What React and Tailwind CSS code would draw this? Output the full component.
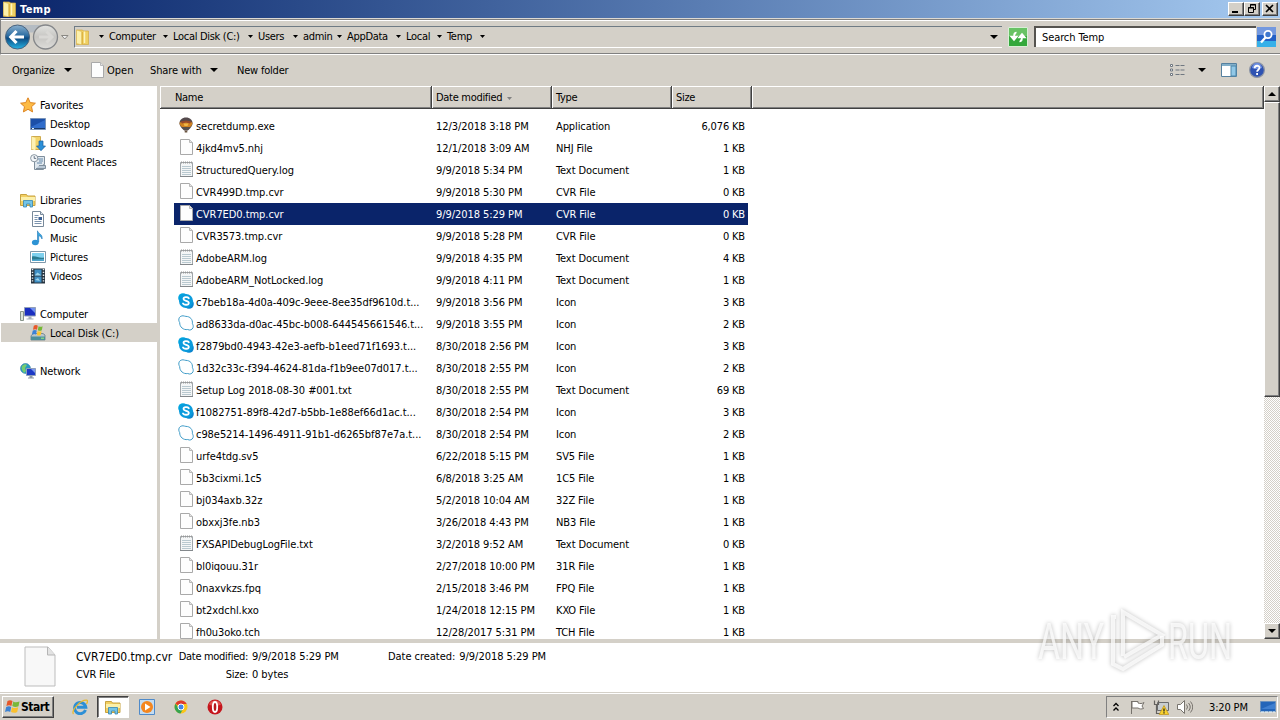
const files = [
    ["balloon", "secretdump.exe", "12/3/2018 3:18 PM", "Application", "6,076 KB"],
    ["file", "4jkd4mv5.nhj", "12/1/2018 3:09 AM", "NHJ File", "1 KB"],
    ["text", "StructuredQuery.log", "9/9/2018 5:34 PM", "Text Document", "1 KB"],
    ["file", "CVR499D.tmp.cvr", "9/9/2018 5:30 PM", "CVR File", "0 KB"],
    ["file", "CVR7ED0.tmp.cvr", "9/9/2018 5:29 PM", "CVR File", "0 KB"],
    ["file", "CVR3573.tmp.cvr", "9/9/2018 5:28 PM", "CVR File", "0 KB"],
    ["text", "AdobeARM.log", "9/9/2018 4:35 PM", "Text Document", "4 KB"],
    ["text", "AdobeARM_NotLocked.log", "9/9/2018 4:11 PM", "Text Document", "1 KB"],
    ["skype", "c7beb18a-4d0a-409c-9eee-8ee35df9610d.t...", "9/9/2018 3:56 PM", "Icon", "3 KB"],
    ["cloud", "ad8633da-d0ac-45bc-b008-644545661546.t...", "9/9/2018 3:55 PM", "Icon", "2 KB"],
    ["skype", "f2879bd0-4943-42e3-aefb-b1eed71f1693.t...", "8/30/2018 2:56 PM", "Icon", "3 KB"],
    ["cloud", "1d32c33c-f394-4624-81da-f1b9ee07d017.t...", "8/30/2018 2:55 PM", "Icon", "2 KB"],
    ["text", "Setup Log 2018-08-30 #001.txt", "8/30/2018 2:55 PM", "Text Document", "69 KB"],
    ["skype", "f1082751-89f8-42d7-b5bb-1e88ef66d1ac.t...", "8/30/2018 2:54 PM", "Icon", "3 KB"],
    ["cloud", "c98e5214-1496-4911-91b1-d6265bf87e7a.t...", "8/30/2018 2:54 PM", "Icon", "2 KB"],
    ["file", "urfe4tdg.sv5", "6/22/2018 5:15 PM", "SV5 File", "1 KB"],
    ["file", "5b3cixmi.1c5", "6/8/2018 3:25 AM", "1C5 File", "1 KB"],
    ["file", "bj034axb.32z", "5/2/2018 10:04 AM", "32Z File", "1 KB"],
    ["file", "obxxj3fe.nb3", "3/26/2018 4:43 PM", "NB3 File", "1 KB"],
    ["text", "FXSAPIDebugLogFile.txt", "3/2/2018 9:52 AM", "Text Document", "0 KB"],
    ["file", "bl0iqouu.31r", "2/27/2018 10:00 PM", "31R File", "1 KB"],
    ["file", "0naxvkzs.fpq", "2/15/2018 3:46 PM", "FPQ File", "1 KB"],
    ["file", "bt2xdchl.kxo", "1/24/2018 12:15 PM", "KXO File", "1 KB"],
    ["file", "fh0u3oko.tch", "12/28/2017 5:31 PM", "TCH File", "1 KB"],
];

const icons = {
    balloon: (
        <>
            <path d="M8 .5c4 0 6.500 2.500 6.500 5.700 0 3.300-3 5.800-4.800 7.300H6.300C4.500 12 1.500 9.500 1.500 6.200 1.500 3 4 .5 8 .5z" fill="#544a4c" />
            <path d="M1.600 5.500 8 4l6.400 1.500c.2 2-1 3.500-2.400 4.500H4C2.600 9 1.400 7.500 1.600 5.500z" fill="#d0821f" />
            <path d="M2.500 4.500 8 3.500l5.500 1L12 6.500 8 5.500 4 6.500z" fill="#96492b" />
            <path d="M5.500 6.500h5L9.500 9h-3z" fill="#eeb648" />
            <path d="M4 10h8l-2.200 3H6.200z" fill="#57504c" />
            <path d="M6.700 13.500h2.600v2H6.700z" fill="#6a5540" />
        </>
    ),
    file: (
        <>
            <path d="M2.500.5h9l3 3v12h-12z" fill="#fdfdfd" stroke="#a9a9a9" />
            <path d="M11.500.5v3h3" fill="#e4e4e4" stroke="#b9b9b9" />
        </>
    ),
    text: (
        <>
            <path d="M2.500 1.500h12v14h-12z" fill="#f4f6f7" stroke="#a0a6aa" />
            <path d="M4 5.500h9M4 7.500h9M4 9.500h9M4 11.500h9M4 13.500h9" stroke="#b9c9d0" />
            <path d="M3 1.500h11" stroke="#999" strokeWidth="2" strokeDasharray="1 1" />
            <path d="M2 15.500h13" stroke="#83888c" />
        </>
    ),
    skype: (
        <>
            <circle cx="5" cy="5" r="4.800" fill="#00a5e0" />
            <circle cx="11" cy="11" r="4.800" fill="#0b86cf" />
            <circle cx="8" cy="8" r="7" fill="#0a9bdc" />
            <path d="M10.800 5.300C9.700 3.700 5.500 3.800 5.500 6c0 2.300 5.300 1.300 5.300 3.900 0 2.300-4.600 2.400-5.800.6" fill="none" stroke="#fff" strokeWidth="1.800" strokeLinecap="round" />
        </>
    ),
    cloud: (
        <path d="M5 .8c1.200 0 1.900.6 2.900.6 4.200 0 7 3 6.500 7.300.8 1.400 1.100 2.600.6 4-.7 2-3.200 3-5.300 1.800C5.500 15.300 1.500 12 1.700 7.600.7 6 .5 4.300 1.300 2.700 2 1.500 3.400.8 5 .8z" fill="#fff" stroke="#3f9cc8" />
    ),
    folder: (
        <>
            <path d="M1.500 1h6l1 1h5v13.500h-12z" fill="#efd062" stroke="#d3a944" strokeWidth=".7" />
            <path d="M1.500 1 6.500 2.500v13.300L1.500 14.500z" fill="#fcf0ac" stroke="#dcb958" strokeWidth=".6" />
            <path d="M9.500 2.500V14" stroke="#fdf3bc" strokeWidth="1.500" />
            <path d="M7.500 3v12" stroke="#dfb540" />
        </>
    ),
    star: <path d="m8 .8 2.200 4.800 5.200.6-3.900 3.500 1.100 5.200L8 12.300l-4.600 2.600 1.100-5.200L.6 6.200l5.200-.6z" fill="#fdbb45" stroke="#dd8421" />,
    desktop: (
        <>
            <path d="M.5 2.500h15v11H.5z" fill="#1b4fa8" stroke="#7893b9" />
            <path d="M1 11 15 4v8H1z" fill="#2f6ccb" />
            <path d="M1 12.500h14" stroke="#193968" />
            <path d="M2 12.500h2" stroke="#e4f3ff" />
        </>
    ),
    downloads: (
        <>
            <path d="M1.500 1.500h9v13h-9z" fill="#f3d469" stroke="#ceaa4e" />
            <path d="m1.500 1.500 4 1.500v12.500l-4-1.500z" fill="#fdf2b4" />
            <path d="M9 6h4v5h2.500L11 15.700 6.500 11H9z" fill="#2b8fd8" stroke="#1a5e9e" strokeWidth=".7" />
        </>
    ),
    recent: (
        <>
            <path d="M4.500 2.500h10v8h-1v5h-9z" fill="#dfe7ee" stroke="#7f8f9d" />
            <path d="M6 14.500h9.500v-3H9" fill="#b9c8d6" stroke="#7f8f9d" />
            <path d="M8 5h5M9 7h4M7 9h5" stroke="#6589aa" />
            <circle cx="4.200" cy="4.200" r="3.600" fill="#f3f6f9" stroke="#8996a1" />
            <path d="M4.200 2v2.400h2" fill="none" stroke="#45576a" strokeWidth=".8" />
        </>
    ),
    libraries: (
        <>
            <path d="M.5 2.500h6l1 1.500h7.500v9.500H.5z" fill="#f2cf62" stroke="#c8a340" />
            <path d="M1 5h14v4H1z" fill="#fcf0a9" />
            <path d="M3.500 8.500h9v6.500H10v-3H6.500v3h-3z" fill="#74c4e6" stroke="#3586b4" strokeWidth=".8" />
        </>
    ),
    documents: (
        <>
            <path d="M2.500.5h8l3 3v12h-11z" fill="#fff" stroke="#78899a" />
            <path d="M4.500 4.500h4M4.500 6.500h3M4.500 8.500h3M4.500 10.500h7M4.500 12.500h7" stroke="#7b93ae" />
            <path d="M8.500 6h3.500v3H8.500z" fill="#3a5f93" />
            <path d="M10.500.5v3h3" fill="#dde5ec" stroke="#78899a" />
        </>
    ),
    music: (
        <>
            <path d="M7.500 12V.8c.8 3 5.500 3.500 4.500 8.200-.6-2-2-3-3.300-3.200V12z" fill="#3ba7de" stroke="#1d76b8" strokeWidth=".6" />
            <ellipse cx="5.300" cy="12.500" rx="3.400" ry="2.700" fill="#2d93d4" />
        </>
    ),
    pictures: (
        <>
            <path d="M.5 2.500h15v11H.5z" fill="#fff" stroke="#7f98aa" />
            <path d="M2 4h12v8H2z" fill="#7ed0ee" />
            <path d="M2 7.500c4-1 7 2 12 1V12H2z" fill="#2a7c91" />
            <path d="M2 10.500 14 10v2H2z" fill="#4ea5cc" />
        </>
    ),
    videos: (
        <>
            <path d="M1 .5h14v15H1z" fill="#25333f" />
            <path d="M2.500 1v14M13.500 1v14" stroke="#e4ebef" strokeWidth="1.500" strokeDasharray="1.300 1.500" />
            <path d="M4.500 1.500h7v6h-7zM4.500 8.500h7v6h-7z" fill="#3f8fc4" />
            <path d="m4.500 7.500 3-3 4 3zM5 12l3-2 2 3z" fill="#9bd4ec" />
        </>
    ),
    computer: (
        <>
            <path d="M.5 5.500h3v9h-3z" fill="#dbe3d9" stroke="#88958b" />
            <path d="M4.500 1.500h11v8.500h-11z" fill="#1a2fc0" stroke="#93a0b8" />
            <path d="m10 2 5 0v5z" fill="#6f8ff0" />
            <path d="M8.500 10.500h3v2h2v1h-7v-1h2z" fill="#a5afb9" />
        </>
    ),
    disk: (
        <>
            <path d="m2 9.500 2-1h9l2 1.500v5H1v-4z" fill="#b9c5cd" stroke="#677d88" strokeWidth=".8" />
            <path d="M1 11.500h14V15H1z" fill="#4c8f9a" />
            <path d="M11 13.200h3" stroke="#9df27c" />
            <path d="M3.800.8c1.500-1 3-1 4 0L7 4.800c-1.200-.8-2.500-.8-4 0z" fill="#e8592a" />
            <path d="M8.600 1.200c1.500.9 2.700.8 4 0L11.800 5.200c-1.400.8-2.500.7-4 0z" fill="#74b833" />
            <path d="M2.800 5.600c1.500-.8 2.800-.8 4 0L5.900 9.600c-1.200-.8-2.500-.8-4 0z" fill="#3b82d6" />
            <path d="M7.600 6c1.500.8 2.700.8 4 0l-.8 4c-1.400.8-2.600.7-4 0z" fill="#fcc52c" />
        </>
    ),
    network: (
        <>
            <circle cx="5.500" cy="5.500" r="5" fill="#2799c4" stroke="#337da5" strokeWidth=".6" />
            <path d="M2 3c2-2 4-2 5-1L5 5l1 3-2 2C2 8 1 5 2 3z" fill="#75cc70" />
            <path d="M6.500 5.500h9v7h-9z" fill="#1c39c6" stroke="#8f9fba" />
            <path d="m11 6 4 0v4z" fill="#7b99f0" />
            <path d="M9.500 13h3v1.500h1.500v1H8v-1h1.500z" fill="#8e99a6" />
        </>
    ),
};

const Icon = ({ name, className = "size-4" }) => (
    <svg viewBox="0 0 16 16" className={`shrink-0 ${className}`}>{icons[name]}</svg>
);

const Arrow = ({ className = "w-[5px] h-[3px]" }) => (
    <svg viewBox="0 0 6 3" preserveAspectRatio="none" className={`shrink-0 ${className}`}>
        <path d="M0 0h6L3 3z" fill="currentColor" />
    </svg>
);

const places = [
    ["star", "Favorites", 0], ["desktop", "Desktop", 1], ["downloads", "Downloads", 1], ["recent", "Recent Places", 1], null,
    ["libraries", "Libraries", 0], ["documents", "Documents", 1], ["music", "Music", 1], ["pictures", "Pictures", 1], ["videos", "Videos", 1], null,
    ["computer", "Computer", 0], ["disk", "Local Disk (C:)", 1], null,
    ["network", "Network", 0],
];

const crumbs = [
    ["Computer", "w-[64px]"], ["Local Disk (C:)", "w-[85px]"], ["Users", "w-[45px]"],
    ["admin", "w-[44px]"], ["AppData", "w-[59px]"], ["Local", "w-[41px]"], ["Temp", "w-[43px]"],
];

const raised = "bg-[#d4d0c8] border border-t-white border-l-white border-r-[#404040] border-b-[#404040] shadow-[inset_-1px_-1px_0_#808080]";

const TitleBar = () => (
    <div className="h-[18px] shrink-0 flex items-center bg-linear-to-r from-[#0a246a] to-[#a6caf0] pl-[2px] pr-[2px]">
        <Icon name="folder" />
        <span className="ml-[2px] pt-[2px] text-white font-bold tracking-[0.4px]">Temp</span>
        <div className="ml-auto flex">
            <div className={`w-[16px] h-[14px] ${raised}`}>
                <svg viewBox="0 0 14 12" className="w-[14px] h-[12px]"><path d="M3 8h6v2H3z" /></svg>
            </div>
            <div className={`w-[16px] h-[14px] ${raised}`}>
                <svg viewBox="0 0 14 12" className="w-[14px] h-[12px]" fill="none" stroke="#000">
                    <path d="M5.500 4V1.500h5v5H9M5 2h6M3.500 4.500h5v5h-5zM3 5h6" />
                </svg>
            </div>
            <div className={`ml-[2px] w-[16px] h-[14px] ${raised}`}>
                <svg viewBox="0 0 14 12" className="w-[14px] h-[12px]" stroke="#000" strokeWidth="1.600">
                    <path d="m3 2 7 7M10 2 3 9" />
                </svg>
            </div>
        </div>
    </div>
);

const NavButtons = () => (
    <svg viewBox="0 0 70 30" className="-ml-px w-[70px] h-[30px] shrink-0">
        <defs>
            <linearGradient id="back" x1="0" y1="0" x2="0" y2="1">
                <stop offset="0" stopColor="#8bb0ce" />
                <stop offset=".45" stopColor="#2a6ca2" />
                <stop offset=".55" stopColor="#0c4a82" />
                <stop offset="1" stopColor="#27b4e4" />
            </linearGradient>
            <linearGradient id="fwd" x1="0" y1="0" x2="0" y2="1">
                <stop offset="0" stopColor="#e3e3e1" />
                <stop offset=".5" stopColor="#c6c5c2" />
                <stop offset="1" stopColor="#deddda" />
            </linearGradient>
        </defs>
        <path d="M16 3h30v5q-14 5-30 0z" fill="#b5bcc3" />
        <circle cx="17.500" cy="15" r="12" fill="url(#back)" stroke="#49637e" />
        <path d="M11 15h13M16.500 9 10.800 15l5.700 6" fill="none" stroke="#fff" strokeWidth="3.200" />
        <circle cx="45.500" cy="15" r="12" fill="url(#fwd)" stroke="#85878a" strokeWidth="1.300" />
        <path d="M39 15h12M46.500 9.500 52 15l-5.500 5.500" fill="none" stroke="#d9d8d5" strokeWidth="3" />
        <path d="M61.500 13.500h6.500l-3.200 3.500z" fill="#eee" stroke="#8a8883" />
    </svg>
);

const AddressBar = () => (
    <div className="h-[37px] shrink-0 flex items-center border-t border-b border-l border-t-[#dcd9d3] border-l-[#808080] border-b-white shadow-[inset_0_1px_0_#808080,inset_0_2px_0_#fff,inset_0_-1px_0_#808080] [&_span]:pt-[1px]">
        <NavButtons />
        <div className="ml-[4px] w-[928px] h-[22px] flex items-center border-t border-l border-b border-t-[#6f7b84] border-l-[#6f7b84] border-b-white">
            <Icon name="folder" />
            <Arrow className="w-[5px] h-[3px] ml-[8px] mr-[5px]" />
            {crumbs.map(([label, width]) => (
                <div key={label} className={`flex items-center justify-between pr-[5px] shrink-0 ${width}`}>
                    <span className="whitespace-nowrap">{label}</span>
                    <Arrow className="w-[5px] h-[3px]" />
                </div>
            ))}
            <Arrow className="ml-auto mr-[4px] w-[8px] h-[4px]" />
        </div>
        <svg viewBox="0 0 20 20" className="ml-[6px] size-[20px] shrink-0">
            <path d="M.5.500h19v19H.5z" fill="#35a83c" stroke="#d9efd6" />
            <path d="M1 1h18v8H1z" fill="#69c265" />
            <path d="M8.500 5.500c-2 0-2.500 1-2.500 3v2M3 9.500 6 13l3-3.500zM11.500 14.500c2 0 2.500-1 2.500-3v-2M11 10.500 14 7l3 3.500z" fill="#fff" stroke="#fff" strokeWidth="1.500" />
        </svg>
        <div className="ml-[6px] w-[222px] h-[21px] flex items-center bg-white border-l-2 border-t-2 border-[#55534f] pl-[6px]">
            <span className="tracking-[-0.1px]">Search Temp</span>
        </div>
        <svg viewBox="0 0 19 20" className="ml-px w-[19px] h-[20px] shrink-0">
            <path d="M0 0h19v20H0z" fill="#2360c6" />
            <path d="M0 0h19v8H0z" fill="#7499df" />
            <path d="M0 14h19v6H0z" fill="#36b0e8" />
            <circle cx="11" cy="7.500" r="3.600" fill="#3f78cf" stroke="#fff" strokeWidth="1.800" />
            <path d="m8.500 10.500-4.500 5" stroke="#fff" strokeWidth="2.400" />
        </svg>
    </div>
);

const Toolbar = () => (
    <div className="h-[31px] shrink-0 flex items-center pb-px pl-[12px] pr-[15px] [&_span]:pt-[1px]">
        <span className="w-[52px] tracking-[-0.2px]">Organize</span>
        <Arrow className="w-[8px] h-[4px]" />
        <Icon name="file" className="ml-[17px] size-[16px]" />
        <span className="ml-[2px] w-[43px] tracking-[0px]">Open</span>
        <span className="w-[60px] tracking-[-0.1px]">Share with</span>
        <Arrow className="w-[8px] h-[4px]" />
        <span className="ml-[19px] tracking-[-0.2px]">New folder</span>
        <svg viewBox="0 0 16 14" className="ml-auto w-[16px] h-[14px]" fill="none" stroke="#6f7780">
            <path d="M1.500 1.500h2v2h-2zM1.500 6h2v2h-2zM1.500 10.500h2v2h-2z" fill="#fff" />
            <path d="M6.500 2.500h9M6.500 7h9M6.500 11.500h9" strokeDasharray="4 1" />
        </svg>
        <Arrow className="ml-[13px] w-[8px] h-[4px]" />
        <svg viewBox="0 0 16 14" className="ml-[15px] w-[16px] h-[14px]">
            <path d="M.5.500h15v13H.5z" fill="#fff" stroke="#55809f" />
            <path d="M1 1h14v2H1z" fill="#82afc9" />
            <path d="M10 3h5v10h-5z" fill="#91c8e7" stroke="#4d86aa" />
        </svg>
        <svg viewBox="0 0 16 16" className="ml-[12px] size-[16px]">
            <circle cx="8" cy="8" r="7.400" fill="#2e52b2" stroke="#8d95a5" strokeWidth="1.200" />
            <path d="M3 6a5 5 0 0 1 10 0q-5 2-10 0z" fill="#6c8de0" />
            <path d="M5.600 6.200C5.600 3 10.500 3 10.500 5.800c0 2-2.400 1.800-2.400 4M8.100 11v2" fill="none" stroke="#fff" strokeWidth="1.800" />
        </svg>
    </div>
);

const Sidebar = () => (
    <div className="w-[160px] shrink-0 border-r-3 border-[#d4d0c8] pt-[9px]">
        {places.map((p, i) =>
            p ? (
                <div key={i} className={`h-[19px] flex items-center gap-[4px] ml-px ${p[2] ? "pl-[29px]" : "pl-[19px]"} ${p[0] === "disk" ? "bg-[#d4d0c8]" : ""}`}>
                    <Icon name={p[0]} />
                    <span className="whitespace-nowrap pt-[2px] tracking-[-0.15px]">{p[1]}</span>
                </div>
            ) : (
                <div key={i} className="h-[19px]" />
            )
        )}
    </div>
);

const headCell = "h-full flex items-center pt-[2px] border-r border-b border-[#404040] shadow-[inset_1px_1px_0_#fff,inset_-1px_-1px_0_#808080]";

const FileList = () => (
    <div className="flex-1 min-w-0 flex flex-col overflow-hidden">
        <div className="h-[23px] shrink-0 flex bg-[#d4d0c8]">
            <div className={`w-[272px] pl-[15px] ${headCell}`}>Name</div>
            <div className={`w-[120px] pl-[4px] ${headCell}`}>
                Date modified
                <Arrow className="ml-[5px] w-[5px] h-[3px] text-[#808080]" />
            </div>
            <div className={`w-[120px] pl-[4px] ${headCell}`}>Type</div>
            <div className={`w-[80px] pl-[4px] ${headCell}`}>Size</div>
            <div className={`flex-1 ${headCell}`} />
        </div>
        <div className="pt-[6px] pl-[14px] tracking-[-0.06px] [&_span]:pt-[2px]">
            {files.map(([icon, name, date, type, size]) => (
                <div key={name} className={`w-[574px] h-[22px] flex items-center whitespace-nowrap ${name === "CVR7ED0.tmp.cvr" ? "bg-[#0a246a] text-white" : ""}`}>
                    <Icon name={icon} className="size-[16px] ml-[4px] mr-[2px] -mt-[2px]" />
                    <span className="w-[240px]">{name}</span>
                    <span className="w-[120px]">{date}</span>
                    <span className="w-[120px] tracking-[-0.1px]">{type}</span>
                    <span className="w-[69px] text-right tracking-[-0.15px]">{size}</span>
                </div>
            ))}
        </div>
    </div>
);

const ScrollBar = () => (
    <div className="w-[16px] shrink-0 flex flex-col bg-[conic-gradient(#fff_25%,#d4d0c8_0_50%,#fff_0_75%,#d4d0c8_0)] bg-size-[2px_2px]">
        <div className={`h-[16px] shrink-0 flex items-center justify-center ${raised}`}>
            <Arrow className="w-[8px] h-[4px] rotate-180" />
        </div>
        <div className={`h-[295px] shrink-0 ${raised}`} />
        <div className={`mt-auto h-[16px] shrink-0 flex items-center justify-center ${raised}`}>
            <Arrow className="w-[8px] h-[4px]" />
        </div>
    </div>
);

const Details = () => (
    <div className="h-[50px] shrink-0 flex bg-white border-b border-[#d4d0c8] leading-[18px] whitespace-nowrap">
        <svg viewBox="0 0 32 40" className="ml-[24px] mt-[3px] w-[32px] h-[41px]">
            <path d="M1 .5h23l7 8v31H1z" fill="#f8f8f8" stroke="#bdbdbd" />
            <path d="M23.500.5v8H31" fill="#e3e3e3" stroke="#b5b5b5" />
        </svg>
        <div className="ml-[20px] w-[102px] pt-[5px]">
            <p className="text-[12px] tracking-[-0.02px]">CVR7ED0.tmp.cvr</p>
            <p className="tracking-[-0.15px]">CVR File</p>
        </div>
        <div className="w-[70px] pt-[5px] flex flex-col items-end">
            <p>Date modified:</p>
            <p>Size:</p>
        </div>
        <div className="ml-[4px] w-[136px] pt-[5px] tracking-[-0.04px]">
            <p>9/9/2018 5:29 PM</p>
            <p>0 bytes</p>
        </div>
        <div className="pt-[5px] flex gap-[4px]">
            <p className="tracking-[-0.04px]">Date created:</p>
            <p className="tracking-[-0.04px]">9/9/2018 5:29 PM</p>
        </div>
    </div>
);

const Taskbar = () => (
    <div className="h-[27px] shrink-0 flex items-center border-t border-white bg-[#d4d0c8] pl-[2px] pr-[2px]">
        <div className={`w-[52px] h-[22px] flex items-center pl-px ${raised}`}>
            <svg viewBox="0 0 16 16" className="size-[16px] shrink-0">
                <path d="M3.500 2c2-1.300 3.500-1 5 0L7.400 7c-1.700-1.200-3.200-1-5 0z" fill="#e5572a" />
                <path d="M9.300 2.500c2 1.200 3.500 1 6.200 0L14.500 7.300c-2.500 1-4.200.8-6.200-.2z" fill="#79b83a" />
                <path d="M2.200 8c1.800-1 3.400-1.200 5 0L6.200 13c-1.500-1.200-3.200-1-5.200 0z" fill="#3c82d3" />
                <path d="M8 8.200c1.900 1.100 3.500 1.200 6.200.1l-1 4.700c-2.500 1.200-4.200 1-6.200 0z" fill="#fbc02d" />
            </svg>
            <span className="ml-px font-bold text-[12px] tracking-[-0.5px]">Start</span>
        </div>
        <svg viewBox="0 0 16 16" className="ml-[18px] size-[16px]" fill="none">
            <path d="M13.500 11A5.600 5.600 0 1 1 13.800 8.300H5" stroke="#2c8fd6" strokeWidth="3" />
            <path d="M1.500 15C-1 12 8 1 14.500 1.200c1.500.2 1 2.300 0 3.800" stroke="#e8b92e" strokeWidth="1.300" />
        </svg>
        <div className="ml-[9px] w-[32px] h-[22px] flex items-center justify-center bg-white border border-t-[#404040] border-l-[#404040] border-r-white border-b-white shadow-[inset_1px_1px_0_#808080]">
            <Icon name="libraries" />
        </div>
        <svg viewBox="0 0 16 16" className="ml-[10px] size-[16px]">
            <path d="M.5.500h15v15H.5z" fill="#c4dcf1" stroke="#4f8ac9" />
            <circle cx="8" cy="8" r="6" fill="#f4861f" />
            <path d="m6 4.500 5.500 3.500L6 11.500z" fill="#fff" />
        </svg>
        <svg viewBox="0 0 16 16" className="ml-[18px] size-[16px]">
            <circle cx="8" cy="8" r="6.500" fill="#fbc518" />
            <path d="M8 8 2.400 4.800A6.500 6.500 0 0 1 13.700 5H8z" fill="#df3a2c" />
            <path d="M8 8H5L2.400 4.800A6.500 6.500 0 0 0 7.500 14.500L10 10z" fill="#36a350" />
            <circle cx="8" cy="8" r="3" fill="#4285e8" stroke="#fff" />
        </svg>
        <svg viewBox="0 0 16 16" className="ml-[18px] size-[16px]">
            <circle cx="8" cy="8" r="7.500" fill="#c5161d" />
            <path d="M2 5.500a6.500 6.500 0 0 1 12 0q-6 3-12 0z" fill="#e25350" />
            <ellipse cx="8" cy="8" rx="2.200" ry="5" fill="#b71a1e" stroke="#fff" strokeWidth="1.800" />
        </svg>
        <div className="ml-auto w-[172px] h-[22px] flex items-center border border-t-[#808080] border-l-[#808080] border-r-white border-b-white">
            <svg viewBox="0 0 8 10" className="ml-[5px] w-[8px] h-[10px]" fill="none" stroke="#000" strokeWidth="1.300">
                <path d="m1.500 4 2.500-2.500L6.500 4M1.500 8.500 4 6l2.500 2.500" />
            </svg>
            <svg viewBox="0 0 16 16" className="ml-[9px] size-[16px]" fill="#fff" stroke="#77736d">
                <path d="M2.500 2v13M3 2.500h6v1.500c2 .8 4 .8 6-.5l-2 3.500 1.500 2.500c-2 .8-4 .5-5.500-.5H3z" />
            </svg>
            <svg viewBox="0 0 16 16" className="ml-[8px] size-[16px]">
                <path d="M4.500 3.500h11v8h-11z" fill="#c8cdd0" stroke="#696b6d" />
                <path d="M1.500 1.500v4h4v-4M3.500 5.500v9h4" fill="none" stroke="#64625f" strokeWidth="1.200" />
                <path d="m11 6.500 4.800 9H6.200z" fill="#f8d12d" stroke="#bb8f14" strokeWidth=".7" />
                <path d="M11 9.500v3M11 13.300v1.200" stroke="#222" strokeWidth="1.300" />
            </svg>
            <svg viewBox="0 0 17 16" className="ml-[7px] w-[17px] h-[16px]" fill="none" stroke="#77736d">
                <path d="M1.500 5.500h3l4-4v13l-4-4h-3z" fill="#fff" />
                <path d="M10.500 5.500q2 2.500 0 5M12.500 4q3.500 4 0 8M14.500 2.500q4.500 5.500 0 11" />
            </svg>
            <span className="ml-[16px] w-[51px] pt-[2px] whitespace-nowrap tracking-[-0.15px]">3:20 PM</span>
            <svg viewBox="0 0 16 14" className="size-[16px]">
                <path d="M.5 1.500h15v10H.5z" fill="#2365b9" stroke="#6b91bd" />
                <path d="M1 9 15 3v6z" fill="#3f7fd0" />
                <path d="M1 12h14" stroke="#e4f4ff" strokeDasharray="3 1" />
            </svg>
        </div>
    </div>
);

const Watermark = () => (
    <svg viewBox="0 0 250 90" className="absolute left-[1030px] top-[600px] w-[250px] h-[90px] overflow-visible drop-shadow-[0_0_2px_#0005]">
        <g fill="#fff" fillOpacity=".75" className="font-['Roboto'] text-[50px] leading-[50px] tracking-normal">
            <text x="8" y="59" textLength="66" lengthAdjust="spacingAndGlyphs">ANY</text>
            <text x="138" y="59" textLength="64" lengthAdjust="spacingAndGlyphs">RUN</text>
        </g>
        <g fill="none" stroke="#fff" strokeOpacity=".75" strokeWidth="4">
            <path d="M93 56V12l39 23-38 22" />
            <path d="M86 17h-3v47l10 5 39-24v-9" />
        </g>
    </svg>
);

export default function App() {
    return (
        <div className="relative w-[1280px] h-[720px] overflow-hidden flex flex-col bg-[#d4d0c8] text-black font-['DejaVu_Sans_Condensed','DejaVu_Sans',sans-serif] text-[11px] leading-[14px] tracking-[-0.3px]">
            <TitleBar />
            <AddressBar />
            <Toolbar />
            <div className="flex-1 min-h-0 flex bg-white">
                <Sidebar />
                <FileList />
                <ScrollBar />
            </div>
            <div className="h-[4px] shrink-0" />
            <Details />
            <Taskbar />
            <Watermark />
        </div>
    );
}
